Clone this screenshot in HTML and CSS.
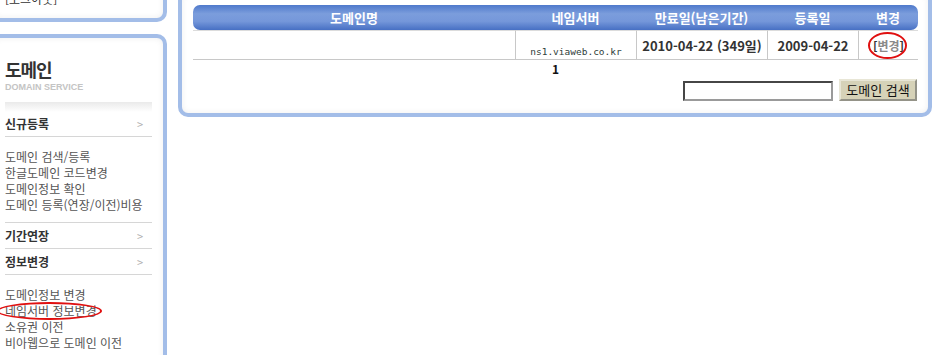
FILE: index.html
```html
<!DOCTYPE html>
<html lang="ko">
<head>
    <meta charset="UTF-8">
    <title>도메인 - 네임서버 정보변경</title>
    <link rel="stylesheet" href="styles.css">
</head>
<body>
    <div class="page">
        <aside class="sidebar">
            <div class="panel panel--top">
                <div class="logout">[로그아웃]</div>
            </div>

            <div class="panel panel--domain">
                <div class="brand">
                    <div class="brand__title">도메인</div>
                    <div class="brand__sub">DOMAIN SERVICE</div>
                </div>
                <div class="menu">
                    <div class="menu__head">신규등록<span class="menu__arrow">&gt;</span></div>
                    <ul class="menu__list">
                        <li>도메인 검색/등록</li>
                        <li>한글도메인 코드변경</li>
                        <li>도메인정보 확인</li>
                        <li>도메인 등록(연장/이전)비용</li>
                    </ul>
                    <div class="menu__head menu__head--line">기간연장<span class="menu__arrow">&gt;</span></div>
                    <div class="menu__head">정보변경<span class="menu__arrow">&gt;</span></div>
                    <ul class="menu__list menu__list--tight">
                        <li>도메인정보 변경</li>
                        <li><span class="circled circled--menu">네임서버 정보변경</span></li>
                        <li>소유권 이전</li>
                        <li>비아웹으로 도메인 이전</li>
                    </ul>
                </div>
            </div>
        </aside>

        <main class="panel panel--main">
            <table class="domains">
                <thead>
                    <tr>
                        <th class="col-name">도메인명</th>
                        <th class="col-ns">네임서버</th>
                        <th class="col-exp">만료일(남은기간)</th>
                        <th class="col-reg">등록일</th>
                        <th class="col-edit">변경</th>
                    </tr>
                </thead>
                <tbody>
                    <tr>
                        <td></td>
                        <td class="ns">ns1.viaweb.co.kr</td>
                        <td class="date">2010-04-22 (349일)</td>
                        <td class="date">2009-04-22</td>
                        <td class="edit"><span class="circled circled--edit">[<em>변경</em>]</span></td>
                    </tr>
                </tbody>
            </table>
            <div class="pager">1</div>
            <form class="search" onsubmit="return false">
                <input class="search__input" type="text">
                <button class="search__button" type="submit">도메인 검색</button>
            </form>
        </main>
    </div>
</body>
</html>
```

FILE: styles.css
```css
/* Reset */
* {
    margin: 0;
    padding: 0;
    box-sizing: border-box;
}
body {
    font-family: "Noto Sans CJK KR", "DejaVu Sans", sans-serif;
    font-size: 12px;
    color: #333;
    background-color: #ffffff;
    overflow: hidden;
}
.page {
    display: flex;
    align-items: flex-start;
}

/* Panels */
.panel {
    background-color: #ffffff;
    border: 4px solid #a3bde8;
    border-radius: 10px;
    box-shadow: inset 0 0 6px rgba(0, 0, 0, 0.07);
}

/* Sidebar */
.sidebar {
    flex: 0 0 177px;
    margin-left: -10px;
}
.panel--top {
    margin-top: -30px;
    height: 52px;
    padding: 0 11px 12px;
    display: flex;
    align-items: flex-end;
}
.logout {
    line-height: 14px;
    color: #333;
}
.panel--domain {
    margin-top: 12px;
    height: 340px;
    padding: 0 11px;
}
.brand {
    padding: 21px 0 9px;
}
.brand__title {
    font-size: 18px;
    font-weight: bold;
    line-height: 20px;
    letter-spacing: -1px;
    color: #333;
}
.brand__sub {
    font-family: "Liberation Sans", Arial, sans-serif;
    font-size: 9px;
    font-weight: bold;
    line-height: 12px;
    margin-top: 2px;
    color: #c4c4c4;
}
.menu {
    padding-top: 9px;
    background: linear-gradient(#eaeaea, #ffffff 10px);
}
.menu__head {
    display: flex;
    justify-content: space-between;
    align-items: center;
    height: 26px;
    padding-right: 9px;
    font-weight: bold;
    color: #333;
    border-bottom: 1px solid #d6d6d6;
}
.menu__head--line {
    border-top: 1px solid #d6d6d6;
    height: 27px;
}
.menu__arrow {
    font-weight: normal;
    color: #b0b0b0;
    font-size: 11px;
}
.menu__list {
    list-style: none;
    padding: 12px 0 9px;
    color: #555;
}
.menu__list--tight {
    padding-top: 12px;
}
.menu__list li {
    line-height: 16px;
    white-space: nowrap;
}

/* Red ring annotation */
.circled {
    position: relative;
    display: inline-block;
}
.circled::after {
    content: "";
    position: absolute;
    border: 2px solid #e01010;
    border-radius: 50%;
}
.circled--menu::after {
    left: -8px;
    right: -5px;
    top: -1px;
    bottom: -1px;
}
.circled--edit::after {
    left: -5px;
    right: -3px;
    top: -5px;
    bottom: -5px;
}

/* Main panel */
.panel--main {
    flex: 0 0 754px;
    margin-left: 11px;
    margin-top: -10px;
    padding: 11px 10px 12px 11px;
}
.domains {
    width: 725px;
    border-collapse: separate;
    border-spacing: 0;
    table-layout: fixed;
}
.domains th {
    height: 25px;
    font-size: 13px;
    font-weight: bold;
    color: #ffffff;
    text-align: center;
    background: linear-gradient(#4f79cb, #7b9ddc 35%, #7597da 65%, #4770c4);
}
.domains th:first-child {
    border-radius: 7px 0 0 7px;
}
.domains th:last-child {
    border-radius: 0 7px 7px 0;
}
.col-name { width: 322px; }
.col-ns { width: 121px; }
.col-exp { width: 131px; }
.col-reg { width: 91px; }
.col-edit { width: 60px; }
.domains td {
    height: 30px;
    text-align: center;
    border-top: 1px solid #dcdcdc;
    border-bottom: 1px solid #c8c8c8;
}
.domains td + td {
    border-left: 1px solid #c8c8c8;
}
.ns {
    font-family: "DejaVu Sans Mono", monospace;
    font-size: 9.5px;
    color: #2e3d3a;
    vertical-align: bottom;
    padding-bottom: 2px;
}
.date {
    font-size: 13px;
    font-weight: bold;
    color: #333;
}
.edit {
    font-weight: bold;
    color: #333;
}
.edit em {
    font-style: normal;
    color: #8a8a8a;
}
.pager {
    text-align: center;
    font-weight: bold;
    color: #111;
    line-height: 14px;
    margin-top: 2px;
}
.search {
    display: flex;
    justify-content: flex-end;
    align-items: flex-end;
    gap: 6px;
    margin-top: 3px;
    padding-right: 1px;
}
.search__input {
    width: 150px;
    height: 20px;
    border: 2px inset #9a9a9a;
    background: #ffffff;
}
.search__button {
    width: 78px;
    height: 22px;
    font-family: "Noto Sans CJK KR", sans-serif;
    font-size: 13px;
    line-height: 16px;
    color: #111;
    background-color: #d6d2b8;
    border: 2px outset #e8e6d6;
}
```
